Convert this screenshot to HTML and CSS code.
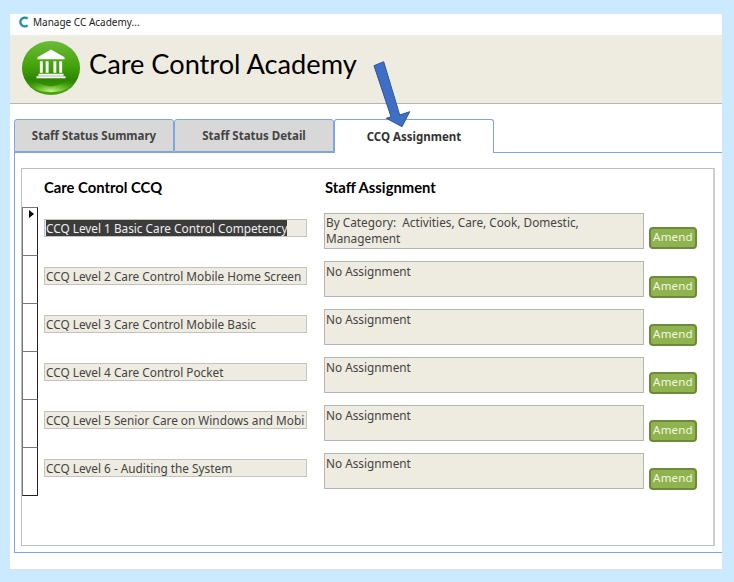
FILE: index.html
```html
<!DOCTYPE html>
<html lang="en">
<head>
<meta charset="utf-8">
<title>Manage CC Academy</title>
<link rel="stylesheet" href="styles.css">
</head>
<body>
<div class="window">
  <div class="titlebar">
    <svg class="app-icon" width="12" height="12" viewBox="0 0 12 12"><path d="M9.6 2.6A4.4 4.4 0 1 0 9.6 9.4" fill="none" stroke="#1b8ea6" stroke-width="2.4"/></svg>
    <span>Manage CC Academy...</span>
  </div>
  <header class="banner">
    <svg class="logo" width="60" height="58" viewBox="0 0 62 58">
      <defs>
        <linearGradient id="ball" x1="0" y1="0" x2="0" y2="1">
          <stop offset="0" stop-color="#6bbd38"/>
          <stop offset="0.45" stop-color="#46a30c"/>
          <stop offset="0.72" stop-color="#2c8602"/>
          <stop offset="1" stop-color="#4aa80e"/>
        </linearGradient>
        <radialGradient id="glow" cx="0.5" cy="0.95" r="0.6">
          <stop offset="0" stop-color="#c4f28c"/>
          <stop offset="1" stop-color="#5fbf10" stop-opacity="0"/>
        </radialGradient>
      </defs>
      <ellipse cx="31" cy="29" rx="30" ry="28" fill="url(#ball)"/>
      <path d="M5 34Q31 62 57 34Q57 54 31 54Q5 54 5 34Z" fill="url(#glow)"/>
      <path d="M31 10L45 18V20H17V18Z" fill="#fff"/>
      <path d="M19.500 22H22.500V34H19.500ZM25.500 22H28.500V34H25.500ZM33.500 22H36.500V34H33.500ZM39.500 22H42.500V34H39.500Z" fill="#fff"/>
      <path d="M18 35H44V37H18ZM16 37.500H46V39.500H16Z" fill="#fff"/>
    </svg>
    <h1>Care Control Academy</h1>
  </header>
  <nav class="tabs">
    <div class="tab">Staff Status Summary</div>
    <div class="tab">Staff Status Detail</div>
    <div class="tab active">CCQ Assignment</div>
  </nav>
  <section class="panel">
    <div class="frame">
      <div class="headings">
        <h2>Care Control CCQ</h2>
        <h2>Staff Assignment</h2>
      </div>
      <div class="rows">
        <div class="row current">
          <div class="selector"><span class="pointer"></span></div>
          <div class="field"><span class="selected">CCQ Level 1 Basic Care Control Competency</span></div>
          <div class="assign">By Category:&nbsp; Activities, Care, Cook, Domestic, Management</div>
          <button class="amend">Amend</button>
        </div>
        <div class="row">
          <div class="selector"></div>
          <div class="field">CCQ Level 2 Care Control Mobile Home Screen</div>
          <div class="assign">No Assignment</div>
          <button class="amend">Amend</button>
        </div>
        <div class="row">
          <div class="selector"></div>
          <div class="field">CCQ Level 3 Care Control Mobile Basic</div>
          <div class="assign">No Assignment</div>
          <button class="amend">Amend</button>
        </div>
        <div class="row">
          <div class="selector"></div>
          <div class="field">CCQ Level 4 Care Control Pocket</div>
          <div class="assign">No Assignment</div>
          <button class="amend">Amend</button>
        </div>
        <div class="row">
          <div class="selector"></div>
          <div class="field">CCQ Level 5 Senior Care on Windows and Mobi</div>
          <div class="assign">No Assignment</div>
          <button class="amend">Amend</button>
        </div>
        <div class="row last">
          <div class="selector"></div>
          <div class="field">CCQ Level 6 - Auditing the System</div>
          <div class="assign">No Assignment</div>
          <button class="amend">Amend</button>
        </div>
      </div>
    </div>
  </section>
  <svg class="arrow" width="44" height="72" viewBox="0 0 44 72">
    <path d="M1 4.700L10.700 0.700L26.700 54L36.700 50.700L29 65.700L13.300 57.300L18 55.700Z" fill="#3f6fc4" stroke="#2f5597" stroke-width="1"/>
  </svg>
</div>
</body>
</html>
```
FILE: styles.css
```css
* { box-sizing: border-box; }
html, body { margin: 0; height: 100%; }
body {
  background: #cbeaff;
  padding: 14px 12px 12px 10px;
  font-family: "Noto Sans", "Open Sans", sans-serif;
  overflow: hidden;
}
.window {
  position: relative;
  width: 712px;
  height: 556px;
  background: #fff;
  border-bottom: 1px solid #e2e2e2;
}
.titlebar {
  height: 21px;
  display: flex;
  align-items: center;
  gap: 3px;
  padding: 0 0 5px 8px;
  font-size: 10px;
  color: #222;
}
.app-icon { flex: none; }
.banner {
  height: 69px;
  background: #eeebe1;
  border-bottom: 1px solid #b8b6b0;
  display: flex;
  align-items: center;
  padding: 0 0 3px 11px;
  gap: 8px;
}
.logo { flex: none; }
.banner h1 {
  margin: 0 0 8px;
  font-family: Lato, "Noto Sans", sans-serif;
  font-size: 27.200px;
  font-weight: 400;
  color: #000;
  white-space: nowrap;
}
.tabs {
  display: flex;
  margin: 15px 0 0 4px;
  height: 34px;
  position: relative;
}
.tab {
  width: 160px;
  height: 33px;
  background: #d8d8d8;
  border: 1px solid #7ea6dc;
  border-radius: 3px 3px 0 0;
  display: flex;
  align-items: center;
  justify-content: center;
  font-size: 11.500px;
  font-weight: 700;
  color: #444;
}
.tab.active {
  background: #fff;
  border-bottom: 0;
  height: 34px;
  color: #333;
  z-index: 1;
}
.panel {
  margin-left: 4px;
  height: 401px;
  margin-top: -1px;
  border: 1px solid #7ea6dc;
  border-right: 0;
  padding: 15px 7px 7px 6px;
}
.frame {
  width: 694px;
  height: 378px;
  border: 1px solid #bdbdbd;
  border-right: 2px solid #cfcfcf;
}
.headings {
  display: grid;
  grid-template-columns: 281px 1fr;
  padding: 8px 0 0 22px;
  height: 38px;
}
.headings h2 {
  margin: 0;
  font-family: Lato, "Noto Sans", sans-serif;
  font-size: 14.800px;
  font-weight: 700;
  color: #000;
  line-height: 20px;
}
.row {
  display: grid;
  grid-template-columns: 16px 262px 320px 48px;
  height: 48px;
  align-items: start;
}
.selector {
  width: 16px;
  height: 49px;
  border: 1px solid #777;
  border-right: 1px solid #222;
  border-bottom: 0;
  position: relative;
}
.last .selector { border-bottom: 1px solid #222; }
.pointer {
  position: absolute;
  left: 6px;
  top: 2px;
  border-left: 5px solid #000;
  border-top: 4px solid transparent;
  border-bottom: 4px solid transparent;
}
.field {
  margin: 12px 0 0 6px;
  width: 263px;
  height: 18px;
  background: #eeebe1;
  border: 1px solid #c3c3c0;
  font-size: 11.800px;
  line-height: 17px;
  color: #444;
  white-space: nowrap;
  padding-left: 1px;
}
.selected { display: inline-block; height: 16px; line-height: 17px; background: #3c3c3c; color: #eee; }
.assign {
  margin: 6px 0 0 24px;
  width: 320px;
  height: 36px;
  background: #eeebe1;
  border: 1px solid #b4b4b0;
  font-size: 11.800px;
  line-height: 16px;
  color: #444;
  padding: 1px 1px 0;
}
.current .assign { padding-top: 0; }
.amend {
  margin: 21px 0 0 29px;
  width: 48px;
  height: 22px;
  background: #8fb34e;
  border: 2px solid #6d8a3a;
  border-radius: 4px;
  font: inherit;
  font-size: 11.500px;
  line-height: 16px;
  color: #f2f8e2;
  padding: 0 0 2px;
  letter-spacing: 0.2px;
}
.current .amend { margin-top: 20px; }
.arrow {
  position: absolute;
  left: 363px;
  top: 47px;
  z-index: 2;
}
```
